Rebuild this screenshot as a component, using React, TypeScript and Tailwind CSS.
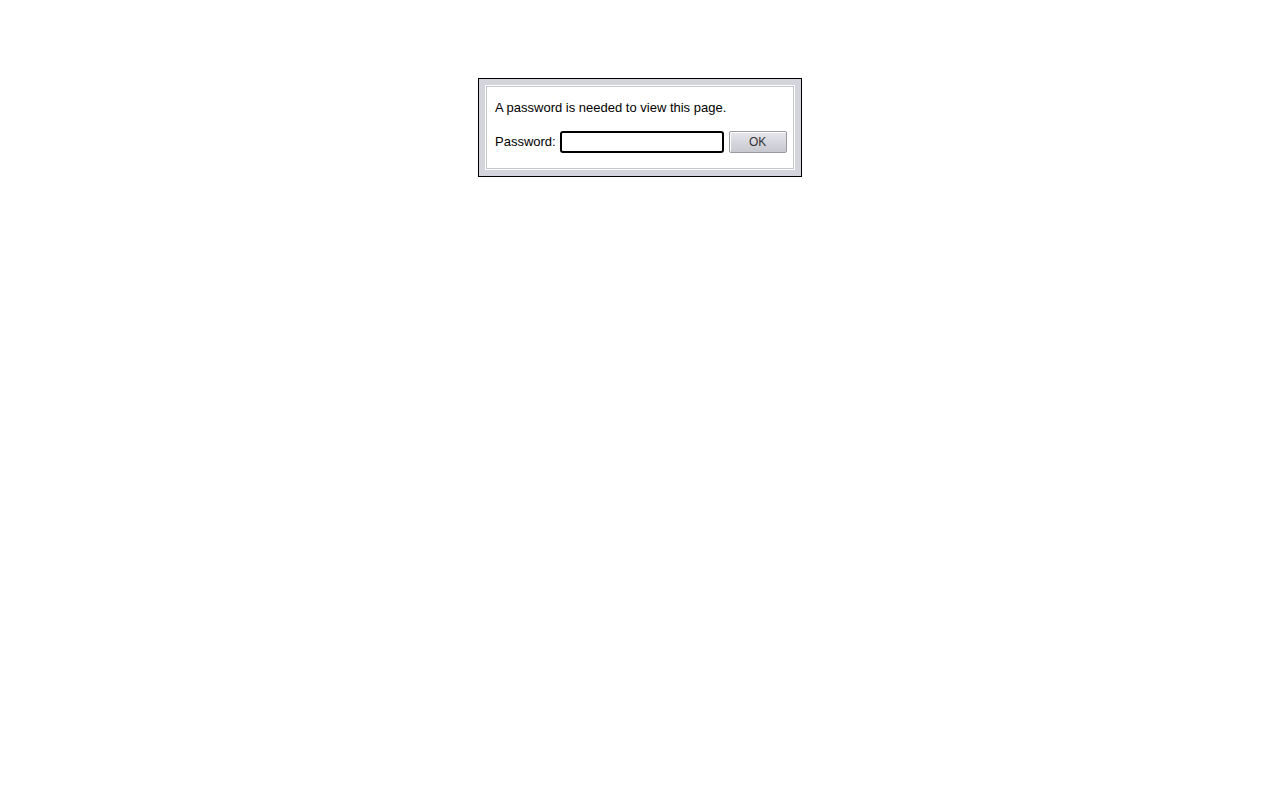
import React from "react";

export default function App() {
  return (
    <div className="min-h-[800px] bg-white flex justify-center pt-[78px]" style={{ fontFamily: '"Liberation Sans", Arial, sans-serif' }}>
      <div className="w-[324px] h-[99px] border border-black bg-[#d4d4dc] p-[6px]">
        <div className="h-full border border-white">
          <div className="h-full border border-[#c4c4cc] bg-white pl-[8px] pt-[13px]">
            <div className="text-[13px] leading-[15px] text-black">A password is needed to view this page.</div>
            <div className="mt-[16px] flex items-center h-[22px]">
              <span className="text-[13px] leading-[15px] text-black mb-[2px]">Password:</span>
              <input
                type="password"
                className="ml-[4px] w-[164px] h-[22px] border-2 border-black rounded-[3px] bg-white outline-none px-1 text-[13px]"
              />
              <button className="ml-[5px] w-[58px] h-[22px] border border-[#9a9aa2] rounded-[2px] bg-gradient-to-b from-[#e6e6ec] to-[#c8c8d0] text-[12px] text-[#333] shadow-[inset_1px_1px_0_#fff]">
                OK
              </button>
            </div>
          </div>
        </div>
      </div>
    </div>
  );
}
